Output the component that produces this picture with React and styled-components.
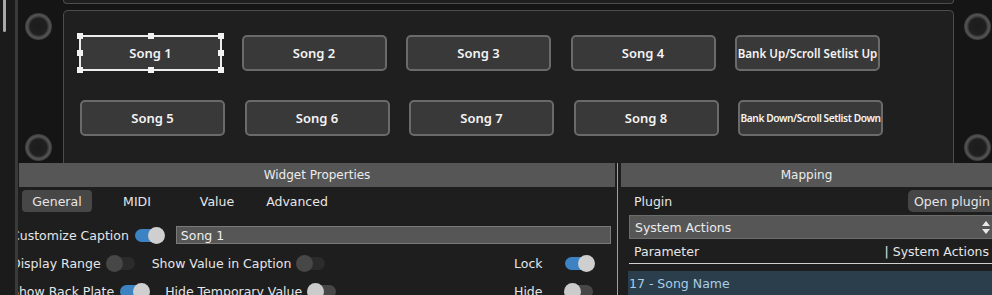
import React from 'react'
import styled, { createGlobalStyle, css } from 'styled-components'

const GlobalStyle = createGlobalStyle`
  body {
    margin: 0;
    background: #161616;
    font-family: 'DejaVu Sans', 'Liberation Sans', sans-serif;
    overflow: hidden;
  }
`

const songsTop = ['Song 1', 'Song 2', 'Song 3', 'Song 4', 'Bank Up/Scroll Setlist Up']
const songsBottom = ['Song 5', 'Song 6', 'Song 7', 'Song 8', 'Bank Down/Scroll Setlist Down']

// size of the caption, shrunk for the long bank captions
const captionSize = s => (s.length > 26 ? 'tiny' : s.length > 20 ? 'small' : 'normal')

const handleSpots = [
  ['0%', '0%'], ['50%', '0%'], ['100%', '0%'],
  ['0%', '50%'], ['100%', '50%'],
  ['0%', '100%'], ['50%', '100%'], ['100%', '100%']
]

const UpDown = () => (
  <svg width="8" height="13" viewBox="0 0 8 13">
    <path d="M4 0 L8 5 L0 5 Z" fill="#e8e8e8" />
    <path d="M0 8 L8 8 L4 13 Z" fill="#e8e8e8" />
  </svg>
)

const App = () => {
  return (
    <Page>
      <GlobalStyle />
      <Sidebar>
        <ScrollThumb />
      </Sidebar>
      <Main>
        <Rack>
          <Ear>
            <Screw />
            <Screw />
          </Ear>
          <RackMiddle>
            <PrevPanel />
            <Panel>
              <ButtonRow $offset={15}>
                {songsTop.map((s, i) => (
                  <SongButton key={s} $selected={i === 0} $size={captionSize(s)}>
                    {s}
                    {i === 0 && handleSpots.map(([x, y]) => <Handle key={x + y} $x={x} $y={y} />)}
                  </SongButton>
                ))}
              </ButtonRow>
              <ButtonRow $offset={16} $second>
                {songsBottom.map(s => (
                  <SongButton key={s} $size={captionSize(s)}>
                    {s}
                  </SongButton>
                ))}
              </ButtonRow>
            </Panel>
          </RackMiddle>
          <Ear $right>
            <Screw />
            <Screw />
          </Ear>
        </Rack>

        <Bottom>
          <WidgetPanel>
            <Header>Widget Properties</Header>
            <Tabs>
              <Tab $active>General</Tab>
              <Tab>MIDI</Tab>
              <Tab>Value</Tab>
              <Tab>Advanced</Tab>
            </Tabs>
            <TabLine />
            <PropRow>
              <Label>Customize Caption</Label>
              <Toggle $state="on" />
              <CaptionInput>Song 1</CaptionInput>
            </PropRow>
            <PropRow>
              <Label>Display Range</Label>
              <Toggle $state="disabled" />
              <Label $spaced>Show Value in Caption</Label>
              <Toggle $state="disabled" />
              <RightGroup>
                <Label>Lock</Label>
                <Toggle $state="on" />
              </RightGroup>
            </PropRow>
            <PropRow>
              <Label>Show Rack Plate</Label>
              <Toggle $state="on" />
              <Label $spaced>Hide Temporary Value</Label>
              <Toggle $state="off" />
              <RightGroup>
                <Label>Hide</Label>
                <Toggle $state="off" />
              </RightGroup>
            </PropRow>
          </WidgetPanel>
          <Divider />
          <MappingPanel>
            <Header>Mapping</Header>
            <PluginRow>
              <MapLabel>Plugin</MapLabel>
              <OpenButton>Open plugin</OpenButton>
            </PluginRow>
            <Select>
              <span>System Actions</span>
              <UpDown />
            </Select>
            <ParamHeader>
              <MapLabel>Parameter</MapLabel>
              <MapLabel>| System Actions</MapLabel>
            </ParamHeader>
            <ParamItem>17 - Song Name</ParamItem>
          </MappingPanel>
        </Bottom>
      </Main>
    </Page>
  )
}

const Page = styled.div`
  display: flex;
  width: 992px;
  height: 295px;
  overflow: hidden;
  background: #161616;
`

const Sidebar = styled.div`
  flex: none;
  width: 15px;
  height: 100%;
  background: #1b1b1b;
  border-right: 3px solid #3a3a3a;
`

const ScrollThumb = styled.div`
  margin-left: 3px;
  width: 3px;
  height: 32px;
  background: #a8a8a8;
  border-radius: 0 0 2px 2px;
`

const Main = styled.div`
  flex: 1;
  display: flex;
  flex-direction: column;
  min-width: 0;
`

const Rack = styled.div`
  display: flex;
  height: 163px;
  overflow: hidden;
  background: #151515;
`

const Ear = styled.div`
  flex: ${p => (p.$right ? '1' : 'none')};
  width: 45px;
  display: flex;
  flex-direction: column;
  justify-content: space-between;
  padding: 13px 0 2px ${p => (p.$right ? '10px' : '7px')};
  box-sizing: border-box;
`

const Screw = styled.div`
  width: 27px;
  height: 27px;
  border-radius: 50%;
  background: radial-gradient(circle at 50% 50%, #1c1c1c 0, #202020 8.5px, #383838 9.5px, #555 11.5px, #3a3a3a 13.5px);
`

const RackMiddle = styled.div`
  flex: none;
  width: 891px;
  display: flex;
  flex-direction: column;
`

const PrevPanel = styled.div`
  height: 3px;
  border: 1px solid #4c4c4c;
  border-top: none;
  border-radius: 0 0 4px 4px;
  background: #1f1f1f;
`

const Panel = styled.div`
  flex: 1;
  margin-top: 6px;
  border: 1px solid #4c4c4c;
  border-bottom: none;
  border-radius: 5px 5px 0 0;
  background: #1f1f1f;
  padding-top: 24px;
`

const ButtonRow = styled.div`
  display: flex;
  gap: 19.5px;
  padding-left: ${p => p.$offset}px;
  margin-top: ${p => (p.$second ? '29px' : '0')};
`

const captionFonts = {
  normal: css`
    font-size: 13px;
  `,
  small: css`
    font-size: 11.6px;
  `,
  tiny: css`
    font-size: 10.2px;
    letter-spacing: -0.4px;
  `
}

const SongButton = styled.div`
  position: relative;
  flex: none;
  width: 145px;
  height: 36px;
  box-sizing: border-box;
  display: flex;
  align-items: center;
  justify-content: center;
  white-space: nowrap;
  border: 2px solid #6a6a6a;
  border-radius: 5px;
  background: #393939;
  color: #f4f4f4;
  font-family: 'Noto Sans', 'DejaVu Sans', sans-serif;
  font-weight: 600;
  ${p => captionFonts[p.$size]}
  ${p =>
    p.$selected &&
    css`
      width: 143px;
      border: 2px solid #ededed;
      border-radius: 0;
    `}
`

const Handle = styled.span`
  position: absolute;
  left: calc(${p => p.$x} - 3px);
  top: calc(${p => p.$y} - 3px);
  width: 6px;
  height: 6px;
  background: #f2f2f2;
  margin-left: ${p => (p.$x === '0%' ? '-1px' : p.$x === '100%' ? '1px' : '0')};
  margin-top: ${p => (p.$y === '0%' ? '-1px' : p.$y === '100%' ? '1px' : '0')};
`

const Bottom = styled.div`
  flex: 1;
  display: flex;
  background: #1e1e1e;
  min-height: 0;
`

const WidgetPanel = styled.div`
  flex: none;
  width: 597px;
  display: flex;
  flex-direction: column;
  overflow: hidden;
`

const Header = styled.div`
  height: 24px;
  flex: none;
  margin-left: 1px;
  background: #565656;
  color: #ececec;
  font-size: 12px;
  display: flex;
  align-items: center;
  justify-content: center;
`

const Tabs = styled.div`
  display: flex;
  gap: 10px;
  margin-top: 3px;
  padding-left: 4px;
  height: 22px;
`

const Tab = styled.div`
  width: 70px;
  height: 22px;
  display: flex;
  align-items: center;
  justify-content: center;
  border-radius: 4px;
  font-size: 12.5px;
  color: #e6e6e6;
  background: ${p => (p.$active ? '#474747' : 'transparent')};
`

const TabLine = styled.div`
  height: 1px;
  margin: 3px 2px 6px 1px;
  background: #b4b4b4;
`

const PropRow = styled.div`
  display: flex;
  align-items: center;
  height: 28px;
  flex: none;
  margin-left: -7px;
  padding-right: 22px;
`

const Label = styled.span`
  flex: none;
  font-size: 12.5px;
  color: #e6e6e6;
  white-space: nowrap;
  margin-left: ${p => (p.$spaced ? '17px' : '0')};
  margin-right: 6px;
`

const toggleStates = {
  on: css`
    background: #3d83c3;
    &::after {
      left: 13px;
      background: #cfcfcf;
    }
  `,
  off: css`
    background: #474747;
    &::after {
      left: -1px;
      background: #cbcbcb;
    }
  `,
  disabled: css`
    background: #2b2b2b;
    &::after {
      left: -1px;
      background: #474747;
    }
  `
}

const Toggle = styled.span`
  position: relative;
  flex: none;
  width: 28px;
  height: 13px;
  border-radius: 7px;
  &::after {
    content: '';
    position: absolute;
    top: -2px;
    width: 17px;
    height: 17px;
    border-radius: 50%;
  }
  ${p => toggleStates[p.$state]}
`

const CaptionInput = styled.div`
  flex: 1;
  height: 18px;
  margin-left: 13px;
  margin-right: -18px;
  box-sizing: border-box;
  background: #565656;
  border: 1px solid #7a7a7a;
  color: #efefef;
  font-size: 12.5px;
  padding-left: 4px;
  display: flex;
  align-items: center;
`

const RightGroup = styled.div`
  margin-left: auto;
  display: flex;
  align-items: center;

  & > span:first-child {
    width: 45px;
  }
`

const Divider = styled.div`
  flex: none;
  width: 1px;
  margin: 0 2px;
  background: #a0a0a0;
`

const MappingPanel = styled.div`
  flex: 1;
  display: flex;
  flex-direction: column;
  overflow: hidden;
  min-width: 0;
`

const MapLabel = styled.span`
  font-size: 12.5px;
  color: #e6e6e6;
  white-space: nowrap;
`

const PluginRow = styled.div`
  display: flex;
  align-items: center;
  height: 28px;
  padding-left: 14px;
`

const OpenButton = styled.div`
  margin-left: auto;
  margin-right: -6px;
  height: 22px;
  padding: 0 8px 0 6px;
  border-radius: 5px;
  background: #464646;
  color: #e6e6e6;
  font-size: 12.5px;
  display: flex;
  align-items: center;
`

const Select = styled.div`
  height: 24px;
  margin-left: 9px;
  box-sizing: border-box;
  background: #565656;
  border: 1px solid #6c6c6c;
  border-right: none;
  color: #ececec;
  font-size: 12.5px;
  display: flex;
  align-items: center;
  justify-content: space-between;
  padding: 0 2px 0 5px;
`

const ParamHeader = styled.div`
  height: 24px;
  margin-left: 9px;
  padding: 0 3px 0 5px;
  display: flex;
  align-items: center;
  justify-content: space-between;
  border-bottom: 1px solid #d0d0d0;
`

const ParamItem = styled.div`
  height: 24px;
  margin: 7px 0 0 8px;
  padding-left: 1px;
  background: #2b3e4c;
  color: #a8cde6;
  font-size: 12.5px;
  display: flex;
  align-items: center;
`

export default App
